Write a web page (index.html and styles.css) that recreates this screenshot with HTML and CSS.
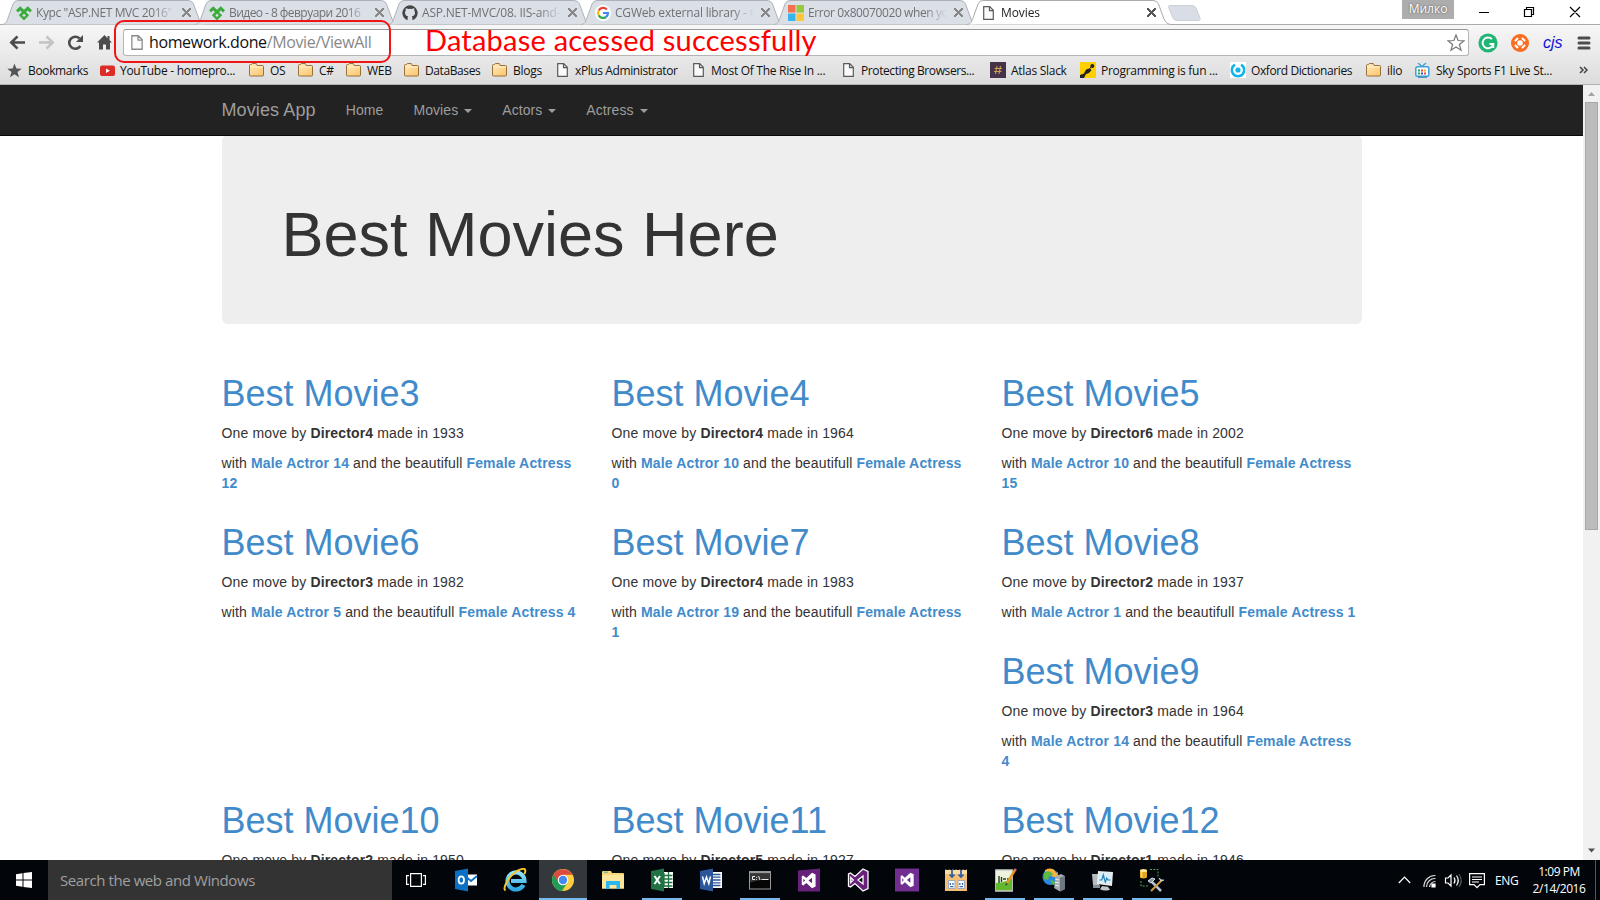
FILE: index.html
```html
<!DOCTYPE html>
<html lang="en">
<head>
<meta charset="utf-8">
<title>Movies</title>
<link rel="stylesheet" href="styles.css">
</head>
<body>
<svg class="defs" width="0" height="0">
  <defs>
    <linearGradient id="gold" x1="0" y1="0" x2="1" y2="1"><stop offset="0" stop-color="#ffe9b8"/><stop offset="1" stop-color="#fbc56d"/></linearGradient>
    <linearGradient id="ieg" x1="0" y1="0" x2="0" y2="1"><stop offset="0" stop-color="#8fe4fb"/><stop offset="1" stop-color="#2fa8e2"/></linearGradient>
  </defs>
  <symbol id="folder" viewBox="0 0 16 14"><path d="M.5 12V2.5q0-1 1-1h1l.8-1h4l.9 2h5.3q1 0 1 1V12q0 1-1 1h-12q-1 0-1-1z" fill="url(#gold)" stroke="#98703a"/><path d="M1.5 4h12" stroke="#fff3d4"/></symbol>
  <symbol id="page" viewBox="0 0 11 14"><path d="M.7.7h6l3.6 3.6v9H.7zM6.5.7v4h4" fill="#fafafa" stroke="#5a5a5a" stroke-width="1.2"/></symbol>
  <symbol id="telerik" viewBox="0 0 16 15"><path d="M1 5.800 4.200 2.800 8 6.400 11.800 2.800 15 5.800" fill="none" stroke="#3cab3c" stroke-width="3"/><path d="M8 6.200 4.600 9.800 8 13.300l3.400-3.500z" fill="none" stroke="#3cab3c" stroke-width="2.500"/></symbol>
  <symbol id="tabshape" viewBox="0 0 206 25"><path d="M0 24.500C4 24 4.500 22 6 18L11 4Q12.500.5 16 .5H186Q190 .5 191.500 4L197 19Q199 24 204 24.500" stroke-width="1"/></symbol>
  <symbol id="vs" viewBox="0 0 22 24"><path d="M16 1 21 3.500V20.500L16 23 8 15.500 3.500 19 1.500 18V6L3.500 5 8 8.500zM16 8 11 12l5 4zM3.800 9.500v5L6.300 12z" fill-rule="evenodd"/></symbol>
</svg>

<header class="chrome">
  <div class="strip">
    <div class="tabs">
      <div class="tab"><svg class="shape"><use href="#tabshape"/></svg><svg class="fav"><use href="#telerik"/></svg><span class="name n1">Курс "ASP.NET MVC 2016"</span><i class="x"></i></div>
      <div class="tab"><svg class="shape"><use href="#tabshape"/></svg><svg class="fav"><use href="#telerik"/></svg><span class="name n2">Видео - 8 февруари 2016</span><i class="x"></i></div>
      <div class="tab"><svg class="shape"><use href="#tabshape"/></svg><svg class="fav" viewBox="0 0 16 16"><path d="M8 .3A7.700 7.700 0 0 0 5.600 15.300V13q0-1.200.6-1.700Q3 11 3 7.500q0-1.200.8-2.100-.3-1 .1-2.200 1 0 2.300.9 1.800-.5 3.600 0 1.300-.9 2.300-.9.400 1.200.1 2.200.8.900.8 2.100 0 3.500-3.200 3.800.6.500.6 1.700v2.300A7.700 7.700 0 0 0 8 .3z" fill="#444"/></svg><span class="name n3">ASP.NET-MVC/08. IIS-and-D</span><i class="x"></i></div>
      <div class="tab"><svg class="shape"><use href="#tabshape"/></svg><svg class="fav" viewBox="0 0 16 16"><circle cx="8" cy="8" r="8" fill="#fff"/><g fill="none" stroke-width="2.200"><path d="M11.800 4.500A5 5 0 0 0 3.700 5.600" stroke="#ea4335"/><path d="M3.700 5.600a5 5 0 0 0 0 4.800" stroke="#fbbc05"/><path d="M3.700 10.400A5 5 0 0 0 11 12" stroke="#34a853"/><path d="M11 12a5 5 0 0 0 2-4H8" stroke="#4285f4"/></g></svg><span class="name n4">CGWeb external library - G</span><i class="x"></i></div>
      <div class="tab"><svg class="shape"><use href="#tabshape"/></svg><svg class="fav" viewBox="0 0 16 16"><path d="M0 0h7.500v7.500H0z" fill="#f4704f"/><path d="M8.500 0H16v7.500H8.500z" fill="#97c93c"/><path d="M0 8.500h7.500V16H0z" fill="#35b5ec"/><path d="M8.500 8.500H16V16H8.500z" fill="#ffc636"/></svg><span class="name n5">Error 0x80070020 when yo</span><i class="x"></i></div>
      <div class="tab active"><svg class="shape"><use href="#tabshape"/></svg><svg class="fav pg"><use href="#page"/></svg><span class="name n6">Movies</span><i class="x"></i></div>
      <svg class="newtab" viewBox="0 0 34 18"><path d="M3 1.500h22q3 0 4 2.500l4 10q1 2.500-2 2.500H10q-3 0-4-2.500L1.800 4Q1 1.500 3 1.500z" fill="#d9dee6" stroke="#ccd0d6"/></svg>
    </div>
    <span class="user">Милко</span>
    <svg class="winctl" width="110" height="24" viewBox="0 0 110 24" fill="none" stroke="#000"><path d="M5 12.500h10M50.500 9.500h7v7h-7zM52.500 9.500v-2h7v7h-2M96 7l10 10M106 7 96 17" stroke-width="1.200"/></svg>
  </div>

  <div class="toolbar">
    <svg class="navbtns" width="120" height="30" viewBox="0 0 120 30" fill="none" stroke="#4c4c4c" stroke-width="2.600"><path d="M25 14.500H12M17.500 8.300 11.300 14.500l6.200 6.200"/><path d="M39 14.500h13M46.500 8.300l6.200 6.200-6.200 6.200" stroke="#c3c3c3"/><path d="M80.300 18A6 6 0 1 1 79.500 10.500"/><path d="M83 7v7h-7z" fill="#4c4c4c" stroke="none"/><path d="M104.500 7 97 14.500h2v7h4v-5h3v5h4v-7h2l-2.500-2.500V8h-2v2.200z" fill="#4c4c4c" stroke="none"/></svg>
    <div class="omnibox">
      <svg class="opage"><use href="#page"/></svg>
      <span class="url">homework.done<em>/Movie/ViewAll</em></span>
      <svg class="star" width="18" height="18" viewBox="0 0 18 18"><path d="M9 1l2.100 5.500 5.900.3-4.600 3.700 1.600 5.700L9 13l-5 3.200 1.600-5.700L1 6.800l5.900-.3z" fill="#fff" stroke="#777" stroke-width="1.200"/></svg>
    </div>
    <div class="exts">
      <svg width="20" height="20" viewBox="0 0 20 20"><circle cx="10" cy="10" r="9.600" fill="#20b574"/><path d="M14 6.200A5.400 5.400 0 1 0 15.300 11H11.500M15.300 10.800V15" fill="none" stroke="#fff" stroke-width="1.900"/></svg>
      <svg width="18" height="18" viewBox="0 0 18 18"><circle cx="9" cy="9" r="9" fill="#f96d20"/><circle cx="9" cy="9" r="2.800" fill="#fff"/><path d="M4.500 6.500l2-2M11.500 4.500l2 2M4.500 11.500l2 2M11.500 13.500l2-2" stroke="#fff" stroke-width="2" stroke-linecap="round"/></svg>
      <span class="cjs">cjs</span>
      <svg width="14" height="14" viewBox="0 0 14 14" stroke="#4c4c4c" stroke-width="3" stroke-linecap="round"><path d="M2 2h10M2 7h10M2 12h10"/></svg>
    </div>
    <div class="callout"></div>
    <div class="note">Database acessed successfully</div>
  </div>

  <nav class="bookmarks">
    <div><svg class="b15" viewBox="0 0 16 16"><path d="M8 .5l2 5.400 5.700.2-4.500 3.600 1.600 5.600L8 12.100l-4.800 3.200 1.600-5.600L.3 6.100 6 5.900z" fill="#555"/></svg><span class="s1">Bookmarks</span></div>
    <div><svg class="b15" viewBox="0 0 15 15"><rect y="2.500" width="15" height="10.500" rx="2" fill="#dd2c28"/><path d="M6 5.500v4.500l4-2.250z" fill="#fff"/></svg><span>YouTube - homepro...</span></div>
    <div><svg class="fold"><use href="#folder"/></svg><span>OS</span></div>
    <div><svg class="fold"><use href="#folder"/></svg><span>C#</span></div>
    <div><svg class="fold"><use href="#folder"/></svg><span>WEB</span></div>
    <div><svg class="fold"><use href="#folder"/></svg><span class="tight">DataBases</span></div>
    <div><svg class="fold"><use href="#folder"/></svg><span>Blogs</span></div>
    <div><svg class="bpg"><use href="#page"/></svg><span class="tight">xPlus Administrator</span></div>
    <div><svg class="bpg"><use href="#page"/></svg><span>Most Of The Rise In ...</span></div>
    <div><svg class="bpg"><use href="#page"/></svg><span class="tight">Protecting Browsers...</span></div>
    <div><svg class="b16" viewBox="0 0 16 16"><path d="M0 0h16v16H0z" fill="#46324a"/><path d="M7 4 5.500 12M10.500 4 9 12M4.500 6.500h7.500M4 9.500h7.500" stroke="#c9a14e" stroke-width="1.100"/></svg><span>Atlas Slack</span></div>
    <div><svg class="b16" viewBox="0 0 16 16"><path d="M0 0h16v16H0z" fill="#ffcf00"/><circle cx="12.300" cy="4" r="2" fill="#222"/><path d="M0 16v-3l4-1.500Q5 8 7 7l3-.5 1.500 1.500L10 10q-2 2-4 2l-2 4z" fill="#222"/><path d="M8 8.500 12 4" stroke="#222"/></svg><span>Programming is fun ...</span></div>
    <div><svg class="b16" viewBox="0 0 16 16"><path d="M0 0h16v16H0z" fill="#fff"/><path d="M5 2.700A6.200 6.200 0 1 0 11 2.700" fill="none" stroke="#0fb5e9" stroke-width="2.500"/><circle cx="8" cy="8" r="2.600" fill="#0fb5e9"/></svg><span class="tight">Oxford Dictionaries</span></div>
    <div><svg class="fold"><use href="#folder"/></svg><span>ilio</span></div>
    <div><svg class="b15" viewBox="0 0 15 15"><path d="M3 0l4 3.500L11 0" fill="none" stroke="#3a9fd5" stroke-width="1.300"/><rect x=".8" y="3.800" width="13" height="9.500" rx="1.500" fill="#fff" stroke="#3a9fd5" stroke-width="1.500"/><path d="M3 14.300h9" stroke="#3a7fb5"/><path d="M3 7.500h2M3 10.500h2" stroke="#29a05c" stroke-width="2"/><path d="M6 7.500h2M9 10.500h2" stroke="#e43" stroke-width="2"/><path d="M9 7.500h2" stroke="#fa2" stroke-width="2"/><path d="M6 10.500h2" stroke="#25c" stroke-width="2"/></svg><span class="s15">Sky Sports F1 Live St...</span></div>
    <svg class="more" viewBox="0 0 10 8"><path d="M1 1l3 3-3 3M5 1l3 3-3 3" fill="none" stroke="#444" stroke-width="1.500"/></svg>
  </nav>
</header>

<main class="viewport">
  <div class="page">
    <nav class="navbar"><div class="container">
      <a class="brand">Movies App</a><a>Home</a><a>Movies <b></b></a><a>Actors <b></b></a><a>Actress <b></b></a>
    </div></nav>
    <div class="container">
      <div class="jumbotron"><h1>Best Movies Here</h1></div>
      <div class="row">
        <article><h2>Best Movie3</h2><p>One move by <strong>Director4</strong> made in 1933</p><p>with <a>Male Actror 14</a> and the beautifull <a>Female Actress 12</a></p></article>
        <article><h2>Best Movie4</h2><p>One move by <strong>Director4</strong> made in 1964</p><p>with <a>Male Actror 10</a> and the beautifull <a>Female Actress 0</a></p></article>
        <article><h2>Best Movie5</h2><p>One move by <strong>Director6</strong> made in 2002</p><p>with <a>Male Actror 10</a> and the beautifull <a>Female Actress 15</a></p></article>
        <article><h2>Best Movie6</h2><p>One move by <strong>Director3</strong> made in 1982</p><p>with <a>Male Actror 5</a> and the beautifull <a>Female Actress 4</a></p></article>
        <article><h2>Best Movie7</h2><p>One move by <strong>Director4</strong> made in 1983</p><p>with <a>Male Actror 19</a> and the beautifull <a>Female Actress 1</a></p></article>
        <article><h2>Best Movie8</h2><p>One move by <strong>Director2</strong> made in 1937</p><p>with <a>Male Actror 1</a> and the beautifull <a>Female Actress 1</a></p></article>
        <article><h2>Best Movie9</h2><p>One move by <strong>Director3</strong> made in 1964</p><p>with <a>Male Actror 14</a> and the beautifull <a>Female Actress 4</a></p></article>
        <article><h2>Best Movie10</h2><p>One move by <strong>Director2</strong> made in 1950</p></article>
        <article><h2>Best Movie11</h2><p>One move by <strong>Director5</strong> made in 1927</p></article>
        <article><h2>Best Movie12</h2><p>One move by <strong>Director1</strong> made in 1946</p></article>
      </div>
    </div>
  </div>
  <div class="scroll"><svg width="17" height="17" viewBox="0 0 17 17"><path d="M5 11l3.500-4 3.500 4z" fill="#a3a3a3"/></svg><div class="thumb"></div><svg width="17" height="17" viewBox="0 0 17 17"><path d="M5 6.500h7L8.500 10.500z" fill="#505050"/></svg></div>
</main>

<footer class="taskbar">
  <div class="start"><svg width="16" height="16" viewBox="0 0 16 16"><path d="M0 2.300 6.500 1.300V7.500H0zM7.500 1.100 16 0v7.500H7.500zM0 8.500h6.500v6.200L0 13.700zM7.500 8.500H16V16L7.500 14.900z" fill="#fff"/></svg></div>
  <div class="search"><span>Search the web and Windows</span></div>
  <div class="apps">
    <div class="tv"><svg width="20" height="14" viewBox="0 0 20 14" fill="none" stroke="#fff" stroke-width="1.200"><path d="M4.600.6h10.800v12.800H4.600zM3 2.600H.6v8.800H3M17 2.600h2.400v8.800H17"/></svg></div>
    <div><svg viewBox="0 0 24 24"><path d="M10 6.500h13v11H10z" fill="#fff"/><path d="M11 8l6 5 6-5" fill="none" stroke="#0a70c6" stroke-width="1.800"/><path d="M1 3l13-2.500v23L1 21z" fill="#0a70c6"/><ellipse cx="7.300" cy="12" rx="2.700" ry="3.700" fill="none" stroke="#fff" stroke-width="1.800"/></svg></div>
    <div><svg viewBox="0 0 24 24"><path d="M20.500 17A8.500 8.500 0 1 1 21.500 13H8" fill="none" stroke="url(#ieg)" stroke-width="4.200"/><path d="M2.500 22.500C-1 20 6 8 14 3q8-4 8.300-.5.200 1.500-1 3.500" fill="none" stroke="#f6c62a" stroke-width="2"/></svg></div>
    <div class="sel"><svg viewBox="0 0 24 24"><circle cx="12" cy="12" r="11" fill="#fbce42"/><path d="M12 12 2.500 6.500A11 11 0 0 0 11 23L16.500 14.500z" fill="#1f9d58"/><path d="M2.500 6.500A11 11 0 0 1 21.500 6.800H12L7.500 14.500z" fill="#dd4b3e"/><circle cx="12" cy="12" r="5.300" fill="#fff"/><circle cx="12" cy="12" r="4.200" fill="#4688f1"/></svg></div>
    <div><svg viewBox="0 0 24 24"><path d="M1 4q0-1 1-1h8l1 2h11q1 0 1 1v14.500H1z" fill="#f7d775"/><path d="M1 7h22v13.500H1z" fill="#fde59b"/><path d="M3 4.200h4" stroke="#52a8a0"/><path d="M5 13h14v8h-3.500v-4h-7v4H5z" fill="#2ab6ee"/></svg></div>
    <div class="run"><svg viewBox="0 0 24 24"><path d="M12 4h11v16H12z" fill="#fff"/><path d="M14 5v14M18.500 4v16M14 7.500h8.500M14 11h8.500M14 14.500h8.500M14 18h8.500" stroke="#207245" stroke-width="1.300"/><path d="M1 3l13-2.500v23L1 21z" fill="#207245"/><path d="M4.500 8l5.500 8M10 8l-5.500 8" stroke="#fff" stroke-width="2"/></svg></div>
    <div><svg viewBox="0 0 24 24"><path d="M12 4h11v16H12z" fill="#fff"/><path d="M14 6.500h7.500M14 9.200h7.500M14 12h7.500M14 14.800h7.500M14 17.500h7.500" stroke="#2b579a" stroke-width="1.300"/><path d="M1 3l13-2.500v23L1 21z" fill="#2b579a"/><path d="M3.500 8.500l1.700 7L7.500 9l2.300 6.500 1.700-7" fill="none" stroke="#fff" stroke-width="1.500"/></svg></div>
    <div class="run"><svg viewBox="0 0 24 24"><path d="M1 3h22v18.500H1z" fill="#999"/><path d="M2 5.500h20v15H2z" fill="#050505"/><path d="M2 5.500h20v6q-10 0-20 3z" fill="#363636"/><path d="M7 8.500H4.500v3H7M8.500 9v.8M8.500 11v.8M10.500 8l1.500 4M13.500 11.500h7" stroke="#eee" fill="none"/></svg></div>
    <div><svg viewBox="0 0 24 24"><path d="M1 2.500 23 .5v23H1z" fill="#68217a"/><use href="#vs" x="2" y="4" width="19" height="17" fill="#fff"/></svg></div>
    <div><svg viewBox="0 0 24 24"><use href="#vs" x="0" y="0" width="24" height="24" fill="#68217a" stroke="#fff" stroke-width="1.300"/></svg></div>
    <div><svg viewBox="0 0 24 24"><path d="M0 .5h24v23H0z" fill="#712d90"/><use href="#vs" x="3" y="4" width="18" height="16" fill="#fff"/></svg></div>
    <div><svg viewBox="0 0 24 24"><path d="M1 2h22v21H1z" fill="#f4bf75"/><path d="M1 2h22v4H1z" fill="#fbdca5"/><path d="M1 1.500h22" stroke="#555" stroke-dasharray="1.500 2"/><path d="M8 2v7M5.500 6.500 8 9l2.500-2.500M17 2v7M14.500 6.500 17 9l2.500-2.500" fill="none" stroke="#285fa9" stroke-width="1.700"/><path d="M4.500 12.500H11v8H4.500zM14 12.500h6.500v8H14z" fill="#fff" stroke="#9ba9bf"/><path d="M6.300 15v2M9 15v2M15.800 15v2M18.500 15v2M6 18.700h3.500M15.500 18.700H19" stroke="#356bb3" stroke-width="1.300"/></svg></div>
    <div class="run"><svg viewBox="0 0 24 24"><path d="M2 1.500h18v22H2z" fill="#edf3df"/><path d="M3 15q8 0 16-5v12.500H3z" fill="#62b82e"/><path d="M2.500 2h17v21h-17z" fill="none" stroke="#bbb"/><path d="M6 8v7M8.500 9v5M10 11h3M14 11h2" stroke="#234510" stroke-width="1.400"/><path d="M22 2 14 15" stroke="#e69a25" stroke-width="2.400"/><path d="M22.800.8l-1 1.700" stroke="#d66" stroke-width="2.500"/><path d="M13 15l-.5 3 2.300-2z" fill="#333"/></svg></div>
    <div class="run"><svg viewBox="0 0 24 24"><circle cx="8.500" cy="9" r="8" fill="#2788dc"/><path d="M2 5q4-4 8-2l1 3-4 3-1 3-4-1zM8 12l4 1 2 3-3 1z" fill="#5cb847"/><path d="M3 2q8-4 11 3l2-1-1 6-6-2 2-2Q8 2 3 4z" fill="#f6b43a"/><path d="M14 8l5-2 4 2v13l-5 2.500L12 20z" fill="#a5acb3"/><path d="M18 9.500 23 8v13l-5 2.500z" fill="#6e767f"/><path d="M13 11l4 1M13 14l4 1M13 17l4 1" stroke="#eee"/></svg></div>
    <div class="run"><svg viewBox="0 0 24 24"><path d="M1 6h7v11H2z" fill="#b5bcbf"/><path d="M2 17h7v3H2z" fill="#888f94"/><path d="M7 3l15 1-1 14L6 16z" fill="#e9eced"/><path d="M8.500 5l12 .8-.8 10L7.500 14.500z" fill="#d5eef9"/><path d="M8.500 12h2.300l1.500-5 2 7 1.500-4 1.200 2h2.500" fill="none" stroke="#2582b4" stroke-width="1.200"/><path d="M11 18l6 .7 2 3q-6 2-10-.5z" fill="#bfc5c8"/></svg></div>
    <div class="run"><svg viewBox="0 0 24 24"><path d="M0 2.500h7v7q-3.500 2-7 0z" fill="#e5a622"/><ellipse cx="3.500" cy="2.500" rx="3.500" ry="1.500" fill="#ffeb95"/><path d="M1.500 3.500v6" stroke="#ffe173" stroke-width="1.500"/><path d="M10 1.500h8v7M1 13v5h8" fill="none" stroke="#50a849" stroke-dasharray="2 1.300"/><path d="M10 12l11 11" stroke="#b3c3d4" stroke-width="2.500"/><path d="M22 12 11 23" stroke="#d09a45" stroke-width="2"/><path d="M8 13l4-3 3 1-4 4zM19 10l2 3 3-1" fill="#8795a3" stroke="#d8dde2"/></svg></div>
  </div>
  <div class="tray">
    <svg width="88" height="20" viewBox="0 0 88 20" fill="none" stroke="#fff" stroke-width="1.200"><path d="M.8 13 6.500 7l5.700 6"/><path d="M26 17A11 11 0 0 1 37.500 5.500M28.500 17a8.500 8.500 0 0 1 9-8.500M31.500 17a6 6 0 0 1 6-5.500" stroke="#ddd"/><path d="M34 17v-3h3v3z" fill="#fff"/><path d="M47.500 8h2.500l3-3v11l-3-3h-2.500zM56 7.500q2 3 0 6M58.500 5.500q3.500 5 0 10"/><path d="M61 4q4.500 6.500 0 13" stroke="#555"/><path d="M71.600 3.600h14.800v11H82l-3 3-3-3h-4.400zM74 7h10M74 9.500h10M74 12h7"/></svg>
    <span class="lang">ENG</span>
    <div class="clock"><span>1:09 PM</span><span>2/14/2016</span></div>
    <i class="peek"></i>
  </div>
</footer>
</body>
</html>
```
FILE: styles.css
```css
* { box-sizing: border-box; }
body { margin: 0; width: 1600px; height: 900px; overflow: hidden; display: flex; flex-direction: column; font-family: "Open Sans", "Noto Sans", sans-serif; background: #fff; }
.defs { position: absolute; }
svg { flex: none; display: block; }

/* browser window */
.chrome { height: 85px; flex: none; background: linear-gradient(#fff 0 24px, #f7f7f7 25px, #dcdcdc 84px); border-bottom: 1px solid #b2b2b2; }
.strip { height: 25px; display: flex; border-bottom: 1px solid #ababab; }
.tabs { display: flex; padding-left: 3px; width: 1402px; height: 25px; }
.tab { position: relative; width: 193px; height: 25px; flex: none; display: flex; align-items: center; padding-left: 13px; font-size: 12px; color: #6e7277; }
.shape { position: absolute; left: -1px; top: 0; width: 206px; height: 25px; fill: #dbdfe6; stroke: #aeb2b8; }
.tab.active { z-index: 2; color: #222; width: 201px; padding-left: 15px; }
.active .shape { fill: #fff; stroke: #ababab; width: 210px; left: -3px; }
.fav { position: relative; width: 16px; height: 16px; }
.fav.pg { width: 11px; height: 14px; margin-right: 2px; }
.name { position: relative; margin-left: 4px; width: 139px; overflow: hidden; white-space: nowrap; letter-spacing: -.2px; -webkit-mask-image: linear-gradient(90deg, #000 84%, transparent); }
.n1 { letter-spacing: -.4px; }
.n2 { letter-spacing: -.55px; }
.n5 { letter-spacing: -.4px; }
.active .name { margin-left: 5px; width: 142px; letter-spacing: -.1px; }
.x { position: relative; width: 9px; height: 9px; margin-left: 7px; background: linear-gradient(45deg, transparent 44%, #888 44% 57%, transparent 57%), linear-gradient(-45deg, transparent 44%, #888 44% 57%, transparent 57%); }
.active .x { margin-left: 4px; background: linear-gradient(45deg, transparent 44%, #555 44% 57%, transparent 57%), linear-gradient(-45deg, transparent 44%, #555 44% 57%, transparent 57%); }
.newtab { width: 34px; height: 18px; margin: 4px 0 0 -2px; }
.user { width: 52px; height: 19px; background: #adadad; color: #fff; font-size: 12px; line-height: 18px; text-align: center; text-shadow: 0 0 2px #444; }
.winctl { margin-left: 20px; }
.toolbar { position: relative; height: 32px; display: flex; align-items: center; padding-top: 3px; }
.navbtns { margin-right: 3px; }
.omnibox { width: 1346px; height: 27px; border: 1px solid #b5b5b5; border-top-color: #999; border-radius: 3px; background: #fff; display: flex; align-items: center; padding: 0 3px 0 7px; }
.opage { width: 12px; height: 15px; opacity: .7; }
.url { margin-left: 6px; font-size: 16px; letter-spacing: -.38px; color: #111; flex: 1; white-space: nowrap; line-height: 22px; padding-bottom: 1px; }
.url em { font-style: normal; color: #888; }
.exts { display: flex; align-items: center; width: 131px; padding-left: 9px; }
.exts svg:nth-child(2) { margin-left: 13px; }
.cjs { width: 34px; margin-left: 14px; font: italic 16px "Liberation Sans", sans-serif; color: #11d; line-height: 20px; }
.callout { position: absolute; left: 114px; top: -5px; width: 277px; height: 43px; border: 2px solid #f01414; border-radius: 10px; }
.note { position: absolute; left: 425px; top: -3px; font: 29px/36px Lato, sans-serif; letter-spacing: .22px; color: #f00; white-space: nowrap; }
.bookmarks { height: 26px; display: grid; align-items: center; font-size: 12px; color: #111; padding-left: 7px; grid-template-columns: 93px 149px 49px 48px 58px 88px 64px 136px 150px 148px 90px 150px 136px 49px 164px 14px; }
.bookmarks div { display: flex; align-items: center; white-space: nowrap; height: 26px; }
.bookmarks span { margin-left: 5px; letter-spacing: -.28px; }
.bookmarks .tight { letter-spacing: -.4px; }
.bookmarks .s1 { margin-left: 6px; letter-spacing: -.35px; }
.bookmarks .s15 { margin-left: 6px; }
.b15 { width: 15px; height: 15px; }
.b16 { width: 16px; height: 16px; }
.fold { width: 16px; height: 14px; }
.bpg { width: 11px; height: 14px; margin-right: 2px; margin-left: 1px; }
.more { width: 10px; height: 8px; }

/* page */
.viewport { height: 775px; flex: none; display: flex; overflow: hidden; }
.page { width: 1583px; height: 775px; overflow: hidden; font: 14px/20px "Liberation Sans", Arial, sans-serif; color: #333; }
.container { width: 1140px; margin: 0 auto; }
.navbar { height: 51px; margin-bottom: -1px; background: #222; border-bottom: 1px solid #080808; color: #9d9d9d; position: relative; }
.navbar .container { display: flex; line-height: 50px; }
.navbar a { padding: 0 15px; letter-spacing: .08px; }
.navbar .brand { font-size: 18px; padding-left: 0; letter-spacing: .12px; }
.navbar b { display: inline-block; vertical-align: middle; margin-left: 2px; border: 4px solid transparent; border-top-color: #9d9d9d; border-bottom: 0; }
.jumbotron { height: 189px; padding: 48px 60px; background: #eee; border-radius: 6px; margin-bottom: 30px; overflow: hidden; }
.jumbotron h1 { margin: 20px 0 10px; font-size: 63px; line-height: 63px; font-weight: 500; }
.row { margin: 0 -15px; }
article { float: left; width: 390px; padding: 0 15px; }
h2 { margin: 20px 0 10px; font-size: 36px; line-height: 39px; font-weight: 500; color: #428bca; }
p { margin: 0 0 10px; letter-spacing: .148px; }
p a { color: #428bca; font-weight: bold; }
.scroll { width: 17px; background: #f1f1f1; display: flex; flex-direction: column; }
.thumb { height: 428px; margin: 0 2px 312px; background: #bcbcbc; border: 1px solid #a8a8a8; flex: none; }

/* taskbar */
.taskbar { height: 40px; flex: none; display: flex; background: #02050a; color: #fff; }
.start { width: 48px; display: flex; align-items: center; justify-content: center; }
.search { width: 344px; background: #333; color: #a0a0a0; font-size: 15px; line-height: 40px; padding-left: 12px; letter-spacing: -.42px; }
.apps { display: grid; grid-template-columns: 49px repeat(15, 49px); width: 1007px; }
.apps div { display: flex; align-items: center; justify-content: center; height: 40px; }
.apps svg { width: 24px; height: 24px; }
.apps .tv { width: 48px; }
.apps .tv svg { width: 20px; height: 14px; }
.apps .sel { background: #33383d; border-bottom: 2px solid #76b9ed; padding-top: 2px; width: 48px; }
.apps .run { width: 40px; margin-left: 5px; border-bottom: 2px solid #76b9ed; padding-top: 2px; }
.tray { display: flex; align-items: center; width: 201px; }
.tray svg { margin-left: -1px; }
.lang { font-size: 12px; margin-left: 9px; width: 26px; letter-spacing: -.4px; }
.clock { display: flex; flex-direction: column; align-items: center; font-size: 12px; line-height: 17px; width: 64px; margin-left: 6px; letter-spacing: -.45px; padding-bottom: 1px; }
.peek { width: 1px; height: 40px; background: #555; margin-left: 4px; }
```
